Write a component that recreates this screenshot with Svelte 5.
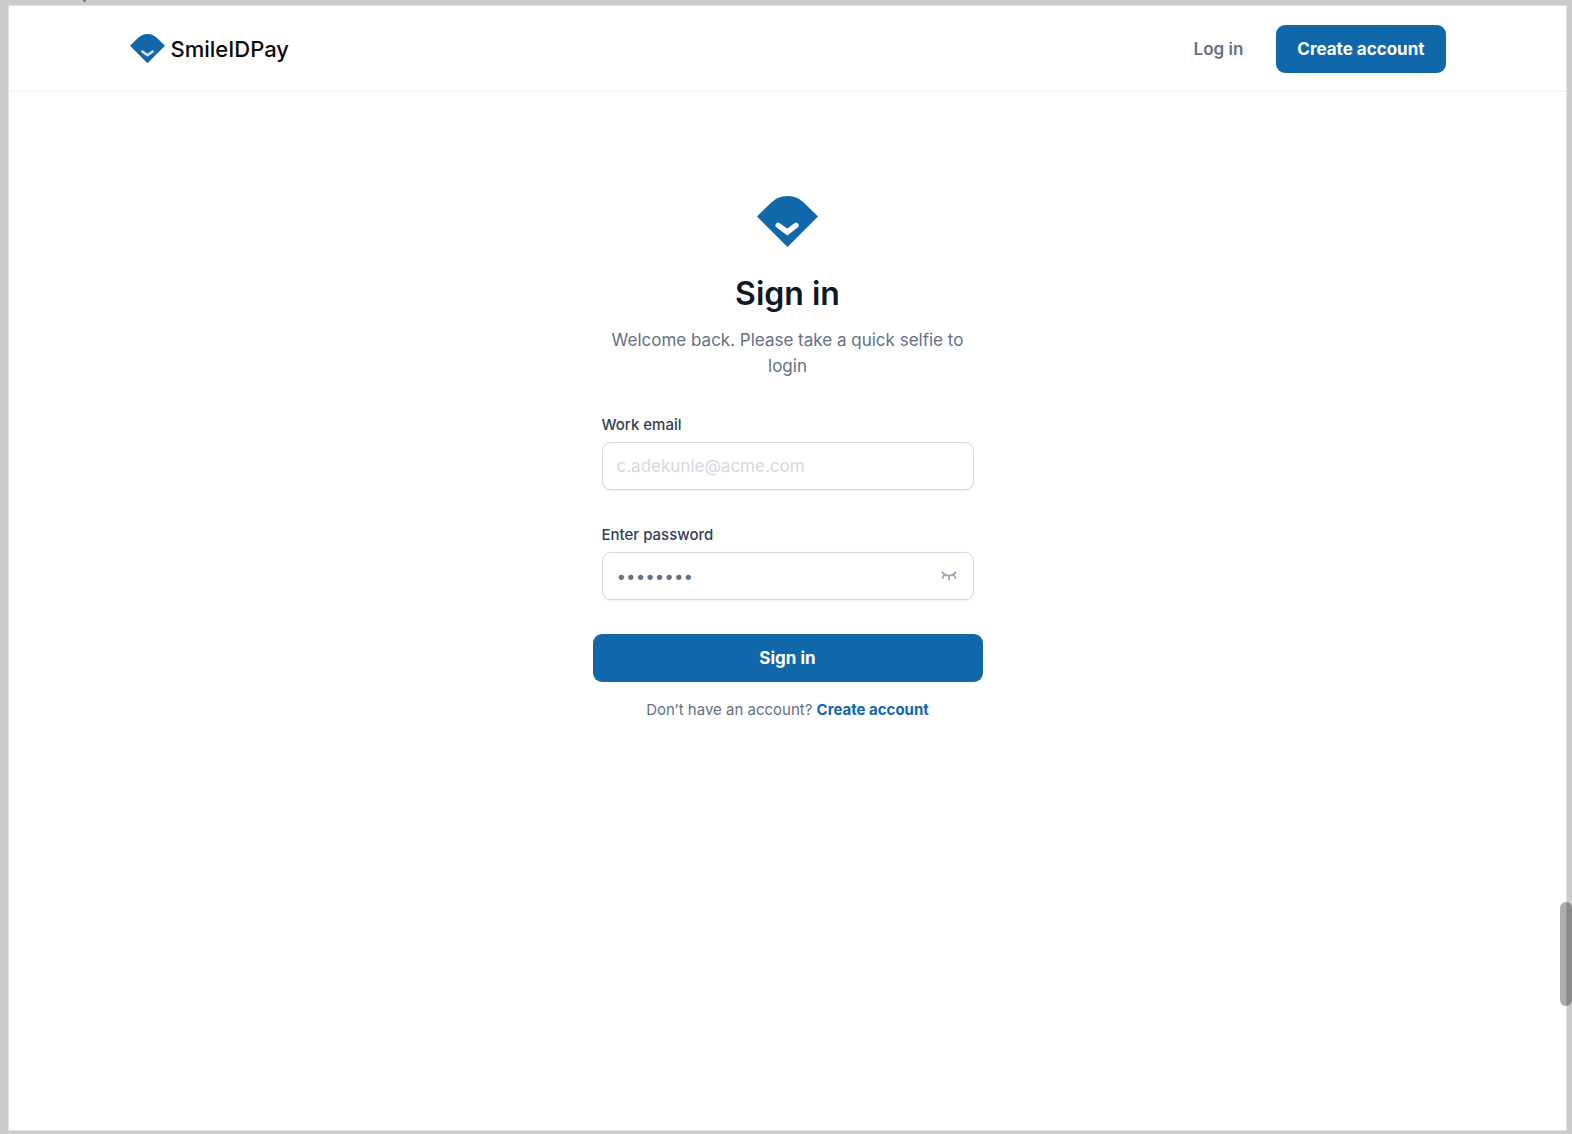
<script>
  let email = $state('');
  let password = $state('password');
  let visible = $state(false);
</script>

{#snippet mark(tick)}
  <svg class="mark" viewBox="0 0 61 51" aria-hidden="true">
    <path d="M0 20.5 12.5 8.2C18 2.8 23 0 30.5 0S43 2.8 48.5 8.2L61 20.5 30.5 51Z" fill="#1068aa" />
    <path d={tick} class="tick" fill="none" stroke-linecap="round" stroke-linejoin="miter" />
  </svg>
{/snippet}

<div class="frame">
  <span class="speck"></span>
  <div class="page">
    <header>
      <div class="bar">
        <a class="brand" href="#home">
          {@render mark('M21.5 30.5 30.5 37 39.5 30.5')}
          <span>SmileIDPay</span>
        </a>
        <nav>
          <a class="login" href="#login">Log in</a>
          <button class="primary" type="button">Create account</button>
        </nav>
      </div>
    </header>

    <main>
      <div class="logo">{@render mark('M21.2 29.3 30.3 36 39 29.3')}</div>
      <h1>Sign in</h1>
      <p class="intro">Welcome back. Please take a quick selfie to login</p>

      <form onsubmit={(e) => e.preventDefault()}>
        <div class="field">
          <label for="email">Work email</label>
          <div class="control">
            <input id="email" type="email" placeholder="c.adekunle@acme.com" bind:value={email} />
          </div>
        </div>
        <div class="field">
          <label for="password">Enter password</label>
          <div class="control">
            <input
              id="password"
              type={visible ? 'text' : 'password'}
              value={password}
              oninput={(e) => (password = e.currentTarget.value)}
            />
            <button class="eye" type="button" aria-label="Show password" onclick={() => (visible = !visible)}>
              <svg viewBox="0 0 16 10" aria-hidden="true">
                <path
                  d="M1.500 1.200C4.500 5.800 11.500 5.800 14.500 1.200M3.500 3.700 1.500 7.200M8 5V8.600M12.500 3.700 14.500 7.200"
                  fill="none"
                  stroke="#98a2b3"
                  stroke-width="1.7"
                  stroke-linecap="round"
                />
              </svg>
            </button>
          </div>
        </div>
        <button class="primary submit" type="submit">Sign in</button>
      </form>
      <p class="signup">Don’t have an account? <a href="#signup">Create account</a></p>
    </main>
  </div>
  <span class="scroll"></span>
</div>

<style>
  :global(body) {
    margin: 0;
    background: #cbcbcb;
  }
  .frame,
  .frame * {
    box-sizing: border-box;
  }
  .frame {
    position: relative;
    display: flex;
    min-height: 100vh;
    padding: 5px 5px 3px 8px;
    font-family: Inter, 'Liberation Sans', sans-serif;
    color: #667085;
  }
  .speck {
    position: absolute;
    top: 0;
    left: 83px;
    width: 3px;
    height: 2px;
    border-radius: 0 0 2px 2px;
    background: #777;
  }
  .page {
    flex: 1;
    border: 1px solid #e2e2e2;
    background: #fff;
  }
  header {
    padding: 19px 24px 18px;
    border-bottom: 1px solid #f0f1f3;
  }
  .bar {
    display: flex;
    align-items: center;
    justify-content: space-between;
    max-width: 1316px;
    margin: 0 auto;
  }
  .brand {
    display: flex;
    align-items: center;
    gap: 6px;
    color: #0a0a0a;
    font-size: 22px;
    font-weight: 500;
    text-decoration: none;
  }
  .mark {
    display: block;
    width: 100%;
  }
  .brand .mark {
    width: 35px;
  }
  .tick {
    stroke: #fff;
    stroke-width: 5.4;
  }
  .brand .tick {
    stroke: #dfe1e4;
    stroke-width: 4.5;
  }
  nav {
    display: flex;
    align-items: center;
    gap: 33px;
  }
  .login {
    color: #667085;
    font-size: 17px;
    font-weight: 600;
    text-decoration: none;
  }
  .primary {
    height: 48px;
    padding: 0 21px;
    border: 0;
    border-radius: 9px;
    background: #1068aa;
    color: #fff;
    font: inherit;
    font-size: 17px;
    font-weight: 700;
    cursor: pointer;
  }
  main {
    display: flex;
    flex-direction: column;
    align-items: center;
    width: 100%;
    max-width: 390px;
    margin: 0 auto;
    padding: 104px 0 48px;
  }
  .logo {
    width: 61px;
  }
  h1 {
    margin: 26px 0 0;
    color: #101828;
    font-size: 32px;
    font-weight: 600;
    line-height: 42px;
  }
  p {
    margin: 0;
    text-align: center;
  }
  .intro {
    padding: 0 9px;
    margin-top: 12px;
    font-size: 17px;
    line-height: 26px;
  }
  form {
    display: flex;
    flex-direction: column;
    width: 100%;
    margin-top: 35px;
  }
  .field {
    padding: 0 9px;
    margin-bottom: 34px;
  }
  label {
    display: block;
    margin-bottom: 6px;
    color: #344054;
    font-size: 15px;
    font-weight: 500;
    line-height: 22px;
  }
  .control {
    display: flex;
    align-items: center;
    height: 48px;
    padding: 0 16px 0 14px;
    border: 1px solid #d5d8e0;
    border-radius: 9px;
    box-shadow: 0 1px 2px rgba(16, 24, 40, 0.08);
  }
  input {
    flex: 1;
    min-width: 0;
    padding: 0;
    border: 0;
    outline: 0;
    background: transparent;
    color: #667085;
    font: inherit;
    font-size: 17px;
  }
  input::placeholder {
    color: #d5d8e0;
  }
  .eye {
    padding: 0;
    border: 0;
    background: none;
    cursor: pointer;
  }
  .eye svg {
    display: block;
    width: 16px;
    height: 10px;
  }
  .signup {
    margin-top: 17px;
    font-size: 15px;
    line-height: 22px;
    white-space: nowrap;
  }
  .signup a {
    color: #1068aa;
    font-weight: 700;
    text-decoration: none;
  }
  .scroll {
    position: absolute;
    top: 902px;
    right: 0;
    width: 12px;
    height: 104px;
    border-radius: 6px;
    background: rgba(0, 0, 0, 0.32);
  }
</style>
